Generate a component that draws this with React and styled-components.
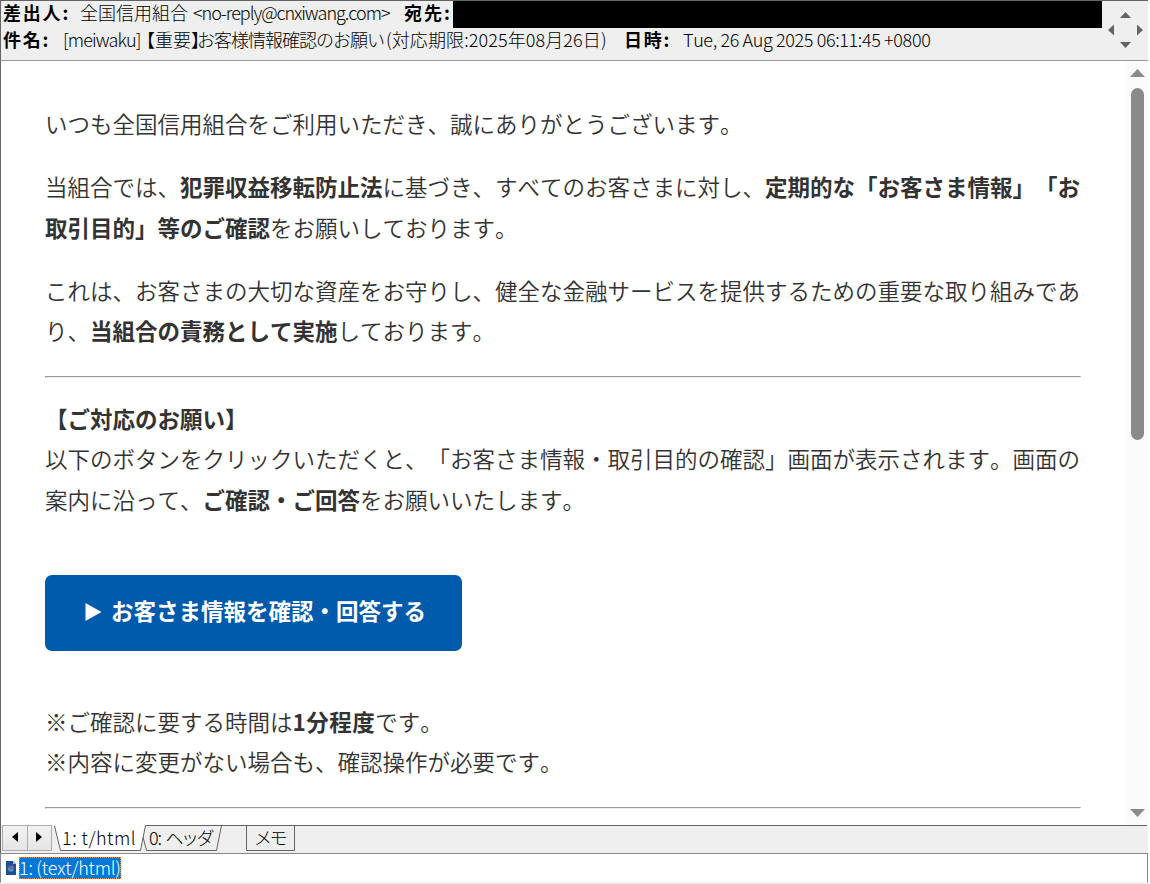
import styled, { createGlobalStyle } from "styled-components";

function App() {
  return (
    <Window>
      <GlobalStyle />
      <Header>
        <HeaderLine>
          <Label $width={77} $spacing={1.8}>差出人:</Label>
          <Run $width={113}>全国信用組合</Run>
          <Run $width={211} $spacing={-1.05}>
            &lt;no-reply@cnxiwang.com&gt;
          </Run>
          <Label $width={49} $spacing={2}>宛先:</Label>
          <Redacted />
        </HeaderLine>
        <HeaderLine>
          <Label $width={60} $spacing={1.8}>件名:</Label>
          <Run $width={75} $spacing={-0.9}>[meiwaku]</Run>
          <Run $width={59} $shift={-1}>【重要】</Run>
          <Run $width={189} $spacing={-1}>お客様情報確認のお願い</Run>
          <Run $width={238} $spacing={0.1}>(対応期限:2025年08月26日)</Run>
          <Label $width={59} $spacing={1.8}>日時:</Label>
          <Run $spacing={-0.37}>Tue, 26 Aug 2025 06:11:45 +0800</Run>
        </HeaderLine>
        <Pager viewBox="0 0 35 36">
          <path d="M17.5 0L23 6H12zM17.5 36L23 30H12zM0 18L6 12.5V23.5zM35 18L29 12.5V23.5z" />
        </Pager>
      </Header>
      <Body>
        <Message>
          <p>いつも全国信用組合をご利用いただき、誠にありがとうございます。</p>
          <p>
            当組合では、<b>犯罪収益移転防止法</b>に基づき、すべてのお客さまに対し、
            <b>定期的な「お客さま情報」「お取引目的」等のご確認</b>をお願いしております。
          </p>
          <p>
            これは、お客さまの大切な資産をお守りし、健全な金融サービスを提供するための重要な取り組みであり、
            <b>当組合の責務として実施</b>しております。
          </p>
          <Rule />
          <p>
            <b>【ご対応のお願い】</b>
            <br />
            以下のボタンをクリックいただくと、「お客さま情報・取引目的の確認」画面が表示されます。画面の案内に沿って、
            <b>ご確認・ご回答</b>をお願いいたします。
          </p>
          <Button href="#">
            <svg width="17" height="18" viewBox="0 0 17 18">
              <path d="M0.5 0L16.5 9L0.5 18z" />
            </svg>
            お客さま情報を確認・回答する
          </Button>
          <p>
            ※ご確認に要する時間は<Duration>1分程度</Duration>です。
            <br />
            ※内容に変更がない場合も、確認操作が必要です。
          </p>
          <Rule />
        </Message>
        <Scrollbar>
          <Arrow viewBox="0 0 15 8">
            <path d="M7.5 0L15 8H0z" />
          </Arrow>
          <Thumb />
          <Arrow viewBox="0 0 15 8">
            <path d="M7.5 8L15 0H0z" />
          </Arrow>
        </Scrollbar>
      </Body>
      <TabBar>
        <Stepper>
          <svg width="6" height="10" viewBox="0 0 6 10">
            <path d="M6 0V10L0 5z" />
          </svg>
        </Stepper>
        <Stepper>
          <svg width="6" height="10" viewBox="0 0 6 10">
            <path d="M0 0V10L6 5z" />
          </svg>
        </Stepper>
        <TabStrip>
          <TabOutline viewBox="0 0 1096 28">
            <path className="page" d="M3.5 0L9.5 25.5H89.5L94.5 0z" />
            <path d="M3.5 1L9.5 25.5H89.5L94.5 0.5H1096M92 12L95.5 25.5H165.5L170.5 0.5M195.5 0V25.5H243.5V0" />
          </TabOutline>
          <TabText $left={11} $spacing={0.5}>1: t/html</TabText>
          <TabText $left={98} $spacing={-1.2}>
            0: <Kana>ヘッダ</Kana>
          </TabText>
          <TabText $left={203} $spacing={-2.5}>メモ</TabText>
        </TabStrip>
      </TabBar>
      <PartList>
        <svg width="10" height="14" viewBox="0 0 10 14">
          <path d="M0 0H7L10 3V14H0z" fill="#1c4f94" />
          <path d="M7 0L10 3H7z" fill="#9db9dc" />
          <circle cx="5" cy="7.5" r="3.3" fill="#5a5fa0" />
          <path d="M2 6.5A3.3 3.3 0 0 0 8 9L5.5 8z" fill="#3b9bb5" />
          <circle cx="6" cy="6.5" r="1.3" fill="#a8647c" />
        </svg>
        <Part>1: (text/html)</Part>
      </PartList>
    </Window>
  );
}

export default App;

const GlobalStyle = createGlobalStyle`
  * {
    box-sizing: border-box;
  }
  body {
    margin: 0;
    background: #fff;
    overflow: hidden;
  }
`;

const Window = styled.div`
  width: 1148px;
  height: 884px;
  font-family: "Noto Sans CJK JP", sans-serif;
  font-kerning: none;
  text-spacing-trim: space-all;
  background: #efefef;
`;

const Header = styled.header`
  position: relative;
  height: 61px;
  border-top: 1px solid #646464;
  border-left: 1px solid #646464;
  border-bottom: 1px solid #999;
  padding-left: 2px;
`;

const HeaderLine = styled.div`
  display: flex;
  height: 27px;
  font-size: 18px;
  line-height: 23px;
  font-weight: 300;
  white-space: nowrap;
  color: #000;
`;

const Run = styled.span`
  flex: none;
  width: ${(p) => (p.$width ? `${p.$width}px` : "auto")};
  letter-spacing: ${(p) => p.$spacing || 0}px;
  text-indent: ${(p) => p.$shift || 0}px;
`;

const Label = styled(Run)`
  font-weight: 700;
`;

const Redacted = styled.div`
  flex: none;
  width: 649px;
  height: 27px;
  background: #000;
`;

const Pager = styled.svg`
  position: absolute;
  top: 11px;
  left: 1107px;
  width: 35px;
  height: 36px;
  fill: #646464;
`;

const Body = styled.main`
  display: flex;
  height: 764px;
  overflow: hidden;
  border-left: 1px solid #646464;
  background: #fff;
`;

const Message = styled.article`
  flex: none;
  width: 1080px;
  padding: 42px 0 0 44px;
  margin-right: 45px;
  font-size: 22.5px;
  line-height: 40.5px;
  font-weight: 350;
  color: #333;

  & p {
    margin: 0 0 22.5px;
  }
  & b {
    font-weight: 700;
  }
`;

const Duration = styled.b`
  letter-spacing: 0.5px;
`;

const Rule = styled.hr`
  height: 2px;
  margin: 25px 0 20px;
  border: 1px solid;
  border-color: #9a9a9a #eee #eee #9a9a9a;
`;

const Button = styled.a`
  display: flex;
  align-items: center;
  gap: 9px;
  width: 417px;
  height: 76px;
  margin: 56px 0 49.5px;
  padding: 0 0 5px 40px;
  border-radius: 7px;
  background: #005bac;
  color: #fff;
  font-weight: 700;
  text-decoration: none;
  white-space: nowrap;

  & svg {
    margin-top: 2px;
  }
  & path {
    fill: #fff;
  }
`;

const Scrollbar = styled.div`
  display: flex;
  flex-direction: column;
  align-items: center;
  width: 22px;
  padding: 8px 0;
  background: #fbfbfb;
`;

const Arrow = styled.svg`
  flex: none;
  width: 15px;
  height: 8px;
  fill: #8a8a8a;
`;

const Thumb = styled.div`
  width: 13px;
  height: 352px;
  margin: 11px 0 auto;
  border-radius: 7px;
  background: #8a8a8a;
`;

const TabBar = styled.nav`
  display: flex;
  height: 28px;
  border-left: 1px solid #646464;
  padding-left: 1px;
`;

const Stepper = styled.button`
  display: flex;
  align-items: center;
  justify-content: center;
  width: 26px;
  height: 26px;
  margin-right: -1px;
  padding: 0 1px 2px 0;
  border: 1px solid #adadad;
  background: linear-gradient(#f2f2f2, #e6e6e6);

  & + & {
    width: 25px;
    padding-right: 2px;
  }
`;

const TabStrip = styled.div`
  position: relative;
  flex: 1;
`;

const TabOutline = styled.svg`
  display: block;
  width: 1096px;
  height: 28px;
  fill: none;
  stroke: #646464;

  & .page {
    fill: #fff;
    stroke: none;
  }
`;

const TabText = styled.span`
  position: absolute;
  top: 0;
  left: ${(p) => p.$left}px;
  font-size: 18px;
  line-height: 25px;
  font-weight: 300;
  letter-spacing: ${(p) => p.$spacing}px;
  white-space: nowrap;
`;

const Kana = styled.span`
  margin-left: 2px;
  letter-spacing: -2.5px;
`;

const PartList = styled.footer`
  display: flex;
  align-items: center;
  gap: 3px;
  height: 30px;
  padding: 0 0 1px 5px;
  border: 1px solid #828790;
  border-bottom: 1px solid #f0f0f0;
  background: #fff;
`;

const Part = styled.span`
  width: 102px;
  height: 22px;
  outline: 1px dotted #ff8728;
  outline-offset: -1px;
  background: #0078d7;
  color: #fff;
  font-size: 18px;
  line-height: 20px;
  font-weight: 300;
  letter-spacing: -0.25px;
  white-space: nowrap;
`;
